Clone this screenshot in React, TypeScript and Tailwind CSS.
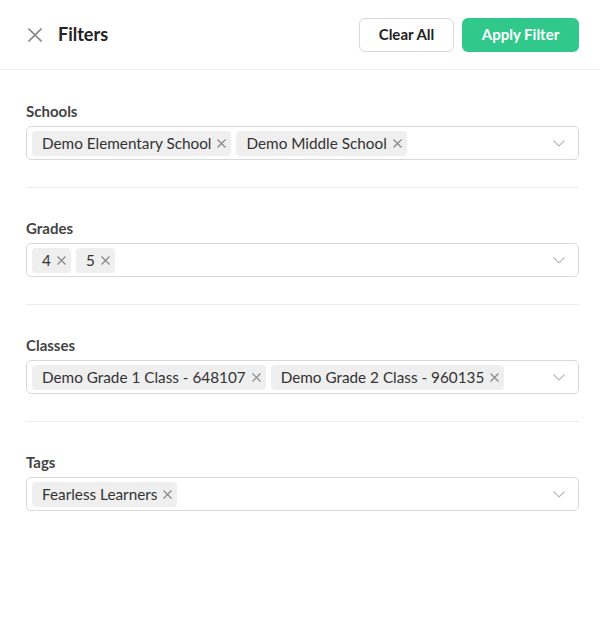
const sections = [
  { label: "Schools", values: ["Demo Elementary School", "Demo Middle School"] },
  { label: "Grades", values: ["4", "5"] },
  { label: "Classes", values: ["Demo Grade 1 Class - 648107", "Demo Grade 2 Class - 960135"] },
  { label: "Tags", values: ["Fearless Learners"] },
]

function Cross({ size, stroke, className }: { size: number; stroke: number; className?: string }) {
  return (
    <svg width={size} height={size} viewBox={`0 0 ${size} ${size}`} className={className} fill="none">
      <path
        d={`M0.5 0.5L${size - 0.5} ${size - 0.5}M${size - 0.5} 0.5L0.5 ${size - 0.5}`}
        stroke="currentColor"
        strokeWidth={stroke}
      />
    </svg>
  )
}

function Chip({ text }: { text: string }) {
  return (
    <span className="flex h-[25px] items-center rounded-[4px] bg-[#efefef] pl-[10px] pr-[5px] text-[15.3px] text-[#333]">
      {text}
      <Cross size={9} stroke={1.2} className="ml-[6px] text-[#888]" />
    </span>
  )
}

export default function App() {
  return (
    <div className="min-h-[635px] w-[600px] bg-white font-['Lato','Liberation_Sans',sans-serif] text-[#222]">
      <header className="flex h-[70px] items-center border-b border-[#ececec] pl-[28px] pr-[21px]">
        <button className="flex h-[14px] w-[14px] items-center justify-center text-[#888]">
          <Cross size={14} stroke={1.6} />
        </button>
        <h1 className="ml-[16px] text-[18px] font-bold text-[#222]">Filters</h1>
        <div className="ml-auto flex gap-2">
          <button className="h-[34px] w-[95px] rounded-[6px] border border-[#d9d9d9] text-[15px] font-bold text-[#222]">
            Clear All
          </button>
          <button className="h-[34px] w-[117px] rounded-[6px] bg-[#30c98b] text-[15px] font-bold text-white">
            Apply Filter
          </button>
        </div>
      </header>

      <div className="pl-[26px] pr-[21px] pt-px">
        {sections.map((s, i) => (
          <section
            key={s.label}
            className={`pt-[30px] pb-[27px] ${i < sections.length - 1 ? "border-b border-[#ececec]" : ""}`}
          >
            <div className="h-[20px] text-[15px] leading-[20px] font-bold text-[#444]">{s.label}</div>
            <div className="mt-[5px] flex h-[34px] items-center rounded-[5px] border border-[#d9d9d9] pl-[5px] pr-[13px]">
              <div className="flex flex-1 gap-[5px]">
                {s.values.map((v) => (
                  <Chip key={v} text={v} />
                ))}
              </div>
              <svg width="12" height="7" viewBox="0 0 12 7" fill="none" className="text-[#bbb]">
                <path d="M0.5 0.5L6 6L11.5 0.5" stroke="currentColor" strokeWidth="1.2" />
              </svg>
            </div>
          </section>
        ))}
      </div>
    </div>
  )
}
